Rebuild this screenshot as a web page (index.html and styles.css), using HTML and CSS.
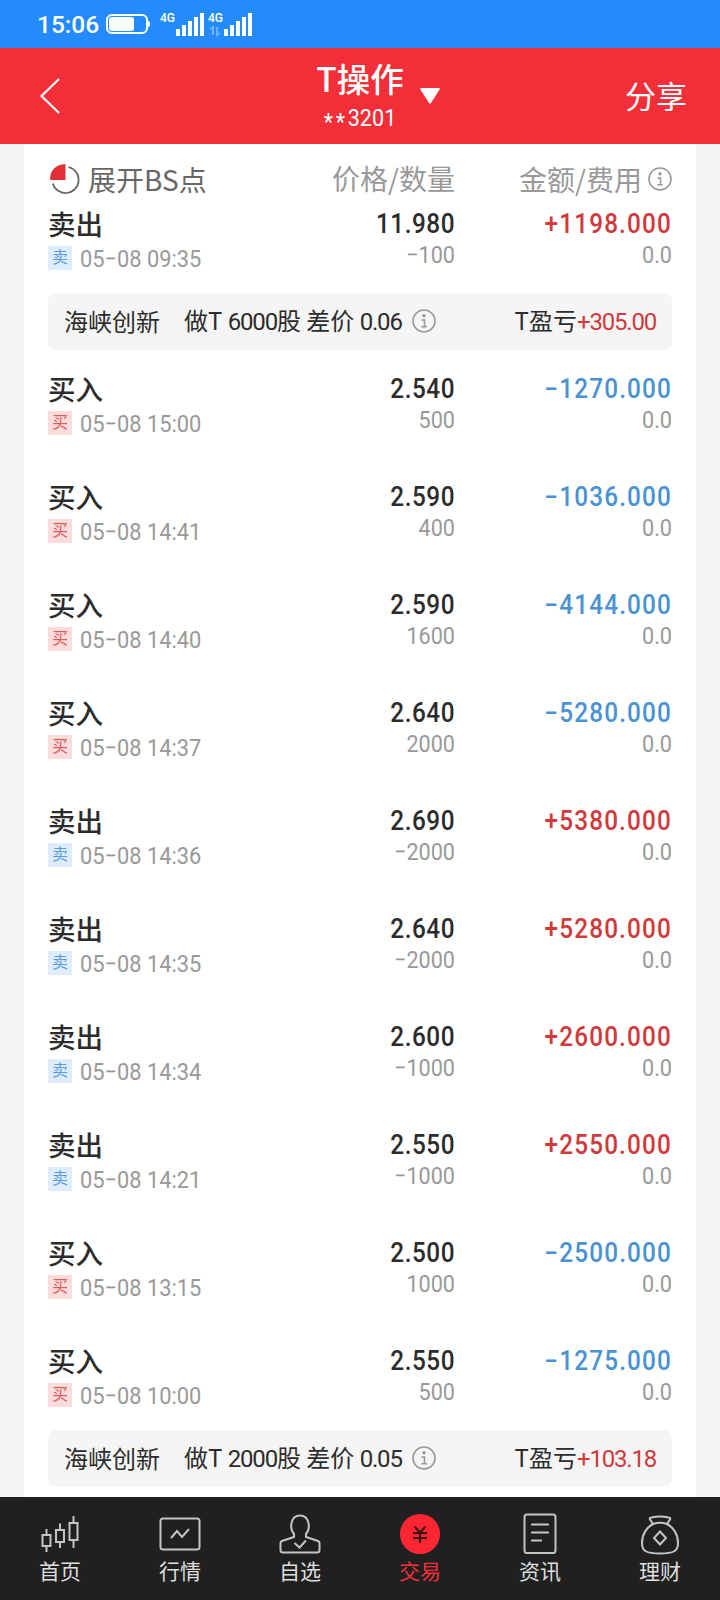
FILE: index.html
```html
<!DOCTYPE html>
<html lang="zh-CN">

<head>
    <meta charset="UTF-8">
    <meta name="viewport" content="width=device-width, initial-scale=1.0">
    <title>T操作</title>
    <link rel="stylesheet" href="styles.css">
</head>

<body>
    <svg width="0" height="0" class="defs">
        <symbol id="info" viewBox="0 0 24 24">
            <circle cx="12" cy="12" r="11" fill="none" stroke="currentColor" stroke-width="1.6"/>
            <circle cx="12" cy="6.8" r="1.7" fill="currentColor"/>
            <path d="M9.5 11h3v6.7M9.3 17.7h5.6" fill="none" stroke="currentColor" stroke-width="1.6"/>
        </symbol>
        <symbol id="bars" viewBox="0 0 28 24">
            <path d="M0 17h4v7H0zM6 13h4v11H6zM12 9h4v15h-4zM18 5h4v19h-4zM24 1h4v23h-4z" fill="currentColor"/>
        </symbol>
    </svg>

    <div class="status">
        <span class="clock">15:06</span>
        <svg class="battery" width="44" height="20" viewBox="0 0 44 20">
            <rect x="1" y="1" width="40" height="18" rx="5" fill="none" stroke="#fff" stroke-width="2"/>
            <rect x="3" y="3" width="25" height="14" rx="3" fill="#fff"/>
            <path d="M42 7q2 0 2 3t-2 3z" fill="#fff"/>
        </svg>
        <div class="signal">
            <span class="net">4G</span>
            <svg width="28" height="24"><use href="#bars"/></svg>
        </div>
        <div class="signal">
            <span class="net">4G
                <svg width="12" height="10" viewBox="0 0 12 10"><path d="M1 3l3-2v8M8 1v8l3-2" fill="none" stroke="#6fb3ff" stroke-width="2"/></svg>
            </span>
            <svg width="28" height="24"><use href="#bars"/></svg>
        </div>
    </div>

    <div class="header">
        <svg class="back" width="20" height="36" viewBox="0 0 20 36"><path d="M19 1L1.500 18L19 35" fill="none" stroke="#fff" stroke-width="2.2"/></svg>
        <div class="account">
            <div class="title">T操作</div>
            <div class="number"><span class="stars">**</span>3201</div>
        </div>
        <svg class="arrow" width="20" height="16" viewBox="0 0 20 16"><path d="M1 0h18q1.500 0 .6 1.500L11 15q-1 1.300-2 0L.4 1.500Q-.5 0 1 0z" fill="#fff"/></svg>
        <div class="share">分享</div>
    </div>

    <div class="content">
        <div class="head">
            <div class="expand">
                <svg width="32" height="32" viewBox="0 0 32 32">
                    <path d="M20.500 4A13.200 13.200 0 1 1 4.800 20.500" fill="none" stroke="#666" stroke-width="1.700"/>
                    <path d="M17.500 1v16H3.500Q2 17 2 15.500 3 2 17.500 1z" fill="#e03035"/>
                </svg>
                <span>展开BS点</span>
            </div>
            <div>价格/数量</div>
            <div class="fee">金额/费用<svg class="info" width="24" height="24"><use href="#info"/></svg></div>
        </div>

        <div class="row">
            <div class="side"><div class="name">卖出</div><div class="time"><span class="tag sell">卖</span><span class="date">05−08 09:35</span></div></div>
            <div class="cell"><div class="big">11.980</div><div class="small">−100</div></div>
            <div class="cell"><div class="big plus">+1198.000</div><div class="small">0.0</div></div>
        </div>
        <div class="summary">
            <span class="stock">海峡创新</span>
            <span class="detail">做T <b>6000</b>股 差价 <b>0.06</b></span>
            <svg class="info" width="24" height="24"><use href="#info"/></svg>
            <span class="profit">T盈亏<b class="plus">+305.00</b></span>
        </div>

        <div class="row">
            <div class="side"><div class="name">买入</div><div class="time"><span class="tag buy">买</span><span class="date">05−08 15:00</span></div></div>
            <div class="cell"><div class="big">2.540</div><div class="small">500</div></div>
            <div class="cell"><div class="big minus">−1270.000</div><div class="small">0.0</div></div>
        </div>
        <div class="row">
            <div class="side"><div class="name">买入</div><div class="time"><span class="tag buy">买</span><span class="date">05−08 14:41</span></div></div>
            <div class="cell"><div class="big">2.590</div><div class="small">400</div></div>
            <div class="cell"><div class="big minus">−1036.000</div><div class="small">0.0</div></div>
        </div>
        <div class="row">
            <div class="side"><div class="name">买入</div><div class="time"><span class="tag buy">买</span><span class="date">05−08 14:40</span></div></div>
            <div class="cell"><div class="big">2.590</div><div class="small">1600</div></div>
            <div class="cell"><div class="big minus">−4144.000</div><div class="small">0.0</div></div>
        </div>
        <div class="row">
            <div class="side"><div class="name">买入</div><div class="time"><span class="tag buy">买</span><span class="date">05−08 14:37</span></div></div>
            <div class="cell"><div class="big">2.640</div><div class="small">2000</div></div>
            <div class="cell"><div class="big minus">−5280.000</div><div class="small">0.0</div></div>
        </div>
        <div class="row">
            <div class="side"><div class="name">卖出</div><div class="time"><span class="tag sell">卖</span><span class="date">05−08 14:36</span></div></div>
            <div class="cell"><div class="big">2.690</div><div class="small">−2000</div></div>
            <div class="cell"><div class="big plus">+5380.000</div><div class="small">0.0</div></div>
        </div>
        <div class="row">
            <div class="side"><div class="name">卖出</div><div class="time"><span class="tag sell">卖</span><span class="date">05−08 14:35</span></div></div>
            <div class="cell"><div class="big">2.640</div><div class="small">−2000</div></div>
            <div class="cell"><div class="big plus">+5280.000</div><div class="small">0.0</div></div>
        </div>
        <div class="row">
            <div class="side"><div class="name">卖出</div><div class="time"><span class="tag sell">卖</span><span class="date">05−08 14:34</span></div></div>
            <div class="cell"><div class="big">2.600</div><div class="small">−1000</div></div>
            <div class="cell"><div class="big plus">+2600.000</div><div class="small">0.0</div></div>
        </div>
        <div class="row">
            <div class="side"><div class="name">卖出</div><div class="time"><span class="tag sell">卖</span><span class="date">05−08 14:21</span></div></div>
            <div class="cell"><div class="big">2.550</div><div class="small">−1000</div></div>
            <div class="cell"><div class="big plus">+2550.000</div><div class="small">0.0</div></div>
        </div>
        <div class="row">
            <div class="side"><div class="name">买入</div><div class="time"><span class="tag buy">买</span><span class="date">05−08 13:15</span></div></div>
            <div class="cell"><div class="big">2.500</div><div class="small">1000</div></div>
            <div class="cell"><div class="big minus">−2500.000</div><div class="small">0.0</div></div>
        </div>
        <div class="row">
            <div class="side"><div class="name">买入</div><div class="time"><span class="tag buy">买</span><span class="date">05−08 10:00</span></div></div>
            <div class="cell"><div class="big">2.550</div><div class="small">500</div></div>
            <div class="cell"><div class="big minus">−1275.000</div><div class="small">0.0</div></div>
        </div>
        <div class="summary">
            <span class="stock">海峡创新</span>
            <span class="detail">做T <b>2000</b>股 差价 <b>0.05</b></span>
            <svg class="info" width="24" height="24"><use href="#info"/></svg>
            <span class="profit">T盈亏<b class="plus">+103.18</b></span>
        </div>
    </div>

    <div class="tabs">
        <div class="tab">
            <svg width="42" height="42" viewBox="0 0 42 42"><path d="M3.500 18h8v11h-8zM7.500 12v6M7.500 29v6M17 13h8v12h-8zM21 6.500V13M21 25v6M30.500 6h8v17h-8zM34.500-1v7M34.500 23v8"/></svg>
            <span>首页</span>
        </div>
        <div class="tab">
            <svg width="42" height="42" viewBox="0 0 42 42"><rect x="1.500" y="1.500" width="39" height="31" rx="2.500"/><path d="M12 21l6-7 5 6 7-8"/></svg>
            <span>行情</span>
        </div>
        <div class="tab">
            <svg width="42" height="42" viewBox="0 0 42 42"><path d="M15 17C10.500 12 11-1.500 21-1.500S31.500 12 27 17v3l12 4q1.500.5 1.500 2v7q0 2.500-2.500 2.500H4q-2.500 0-2.500-2.500v-7q0-1.500 1.500-2l12-4z"/><path d="M15.500 26l5 4.500 6.500-7"/></svg>
            <span>自选</span>
        </div>
        <div class="tab active">
            <svg width="42" height="42" viewBox="0 0 42 42"><circle cx="21" cy="17" r="20"/><path d="M15.500 9.500l5.500 6 5.500-6M14 16h14M14 21h14M21 16v10"/></svg>
            <span>交易</span>
        </div>
        <div class="tab">
            <svg width="42" height="42" viewBox="0 0 42 42"><rect x="5.500" y="-2.500" width="31" height="38.500" rx="2.500"/><path d="M12 7.500h18M12 15.500h18M12 23.500h11"/></svg>
            <span>资讯</span>
        </div>
        <div class="tab">
            <svg width="42" height="42" viewBox="0 0 42 42"><path d="M14 7L10.800 2Q10.500.5 12.500.4 21-1.500 29.500.4q2 .1 1.700 1.600L28 7M14 7q7-2.500 14 0c6 3 11 10 11 19 0 8-4 10.500-18 10.500S3 34 3 26c0-9 5-16 11-19z"/><path d="M21 14.500l6 6.500-6 6.500-6-6.500z"/></svg>
            <span>理财</span>
        </div>
    </div>
</body>

</html>
```

FILE: styles.css
```css
body {
    width: 720px;
    height: 1600px;
    margin: 0;
    display: flex;
    flex-direction: column;
    overflow: hidden;
    background-color: #f5f5f5;
    color: #2c2c2c;
    font-family: Roboto, "Noto Sans CJK SC", sans-serif;
}

svg {
    display: block;
    flex: none;
    overflow: visible;
}

.defs {
    position: absolute;
}

.status {
    height: 48px;
    box-sizing: border-box;
    padding: 0 0 0 37px;
    display: flex;
    align-items: center;
    background: #238bfb;
    color: #fff;
}

.clock {
    width: 69px;
    font-size: 24.5px;
    font-weight: 500;
    padding-top: 1px;
}

.battery {
    margin-right: 10px;
}

.signal {
    display: flex;
    height: 24px;
    width: 48px;
}

.net {
    width: 16px;
    font-size: 12px;
    line-height: 13px;
    font-weight: 500;
}

.net svg {
    margin: 1px 0 0 1px;
}

.header {
    height: 96px;
    box-sizing: border-box;
    padding: 0 33px 0 40px;
    display: grid;
    grid-template-columns: 260px 120px 20px 1fr;
    align-items: center;
    background: #f22f38;
    color: #fff;
}

.account {
    text-align: center;
}

.title {
    font: 500 33.5px/42px "Noto Sans CJK SC", sans-serif;
    margin-top: -2px;
}

.number {
    font-size: 24px;
    line-height: 30px;
    padding-top: 4px;
    height: 30px;
    transform: scaleX(0.9);
}

.stars {
    letter-spacing: 3px;
    line-height: 1;
    vertical-align: -4px;
}

.share {
    font-size: 31px;
    text-align: right;
    padding-bottom: 4px;
}

.content {
    flex: none;
    height: 1353px;
    box-sizing: border-box;
    margin: 0 24px;
    padding: 0 24px;
    background: #fff;
    overflow: hidden;
}

.head, .row {
    display: grid;
    grid-template-columns: 207px 200px 217px;
}

.head {
    height: 58px;
    padding-top: 11px;
    box-sizing: border-box;
    font: 28px/46px "Noto Sans CJK SC", sans-serif;
    color: #999;
    text-align: right;
}

.expand {
    display: flex;
    align-items: center;
    gap: 8px;
    color: #666;
}

.fee {
    display: flex;
    align-items: center;
    justify-content: flex-end;
    gap: 6px;
}

.row {
    height: 91px;
}

.row + .row, .summary + .row {
    margin-top: 17px;
}

.name {
    font-size: 27.5px;
    line-height: 32px;
    padding-top: 8px;
    font-weight: 500;
}

.time {
    display: flex;
    align-items: center;
    height: 24px;
    margin-top: 4px;
    font-size: 24px;
    line-height: 24px;
    color: #999;
    white-space: nowrap;
}

.date {
    padding-top: 2px;
    transform: scaleX(0.91);
    transform-origin: left;
}

.tag {
    width: 24px;
    height: 24px;
    margin-right: 8px;
    font-size: 16px;
    line-height: 24px;
    text-align: center;
}

.sell {
    background: #deedfc;
    color: #5b9be0;
}

.buy {
    background: #fddcdc;
    color: #e2595c;
}

.cell {
    text-align: right;
}

.big, .small {
    transform: scaleX(0.9);
    transform-origin: right;
}

.big {
    padding-top: 7px;
    font-size: 27px;
    line-height: 30px;
    font-weight: 500;
    letter-spacing: 0.6px;
}

.big.plus, .big.minus {
    letter-spacing: 1.3px;
}

.small {
    font-size: 24px;
    line-height: 32px;
    color: #999;
}

.plus {
    color: #d03a3c;
}

.minus {
    color: #4b92d2;
}

.summary {
    display: flex;
    align-items: center;
    height: 57px;
    box-sizing: border-box;
    padding: 0 16px 2px;
    border-radius: 8px;
    background: #f5f5f5;
    font: 24px/40px "Noto Sans CJK SC", sans-serif;
    white-space: nowrap;
}

.summary b {
    font-family: Roboto, sans-serif;
    font-weight: 400;
    letter-spacing: -1.2px;
}

.stock {
    width: 120px;
}

.info {
    color: #999;
}

.detail {
    width: 228px;
}

.profit {
    margin-left: auto;
}

.tabs {
    height: 103px;
    display: grid;
    grid-template-columns: repeat(6, 120px);
    background: #202020;
}

.tab {
    display: flex;
    flex-direction: column;
    align-items: center;
    padding-top: 20px;
    font: 21px/30px "Noto Sans CJK SC", sans-serif;
    color: #dedede;
}

.tab svg {
    fill: none;
    stroke: #c4c4c4;
    stroke-width: 2;
}

.tab span {
    margin-top: -4px;
}

.active {
    color: #f5303a;
}

.active svg {
    stroke: #3a1414;
}

.active circle {
    fill: #ff2634;
    stroke: none;
}
```
